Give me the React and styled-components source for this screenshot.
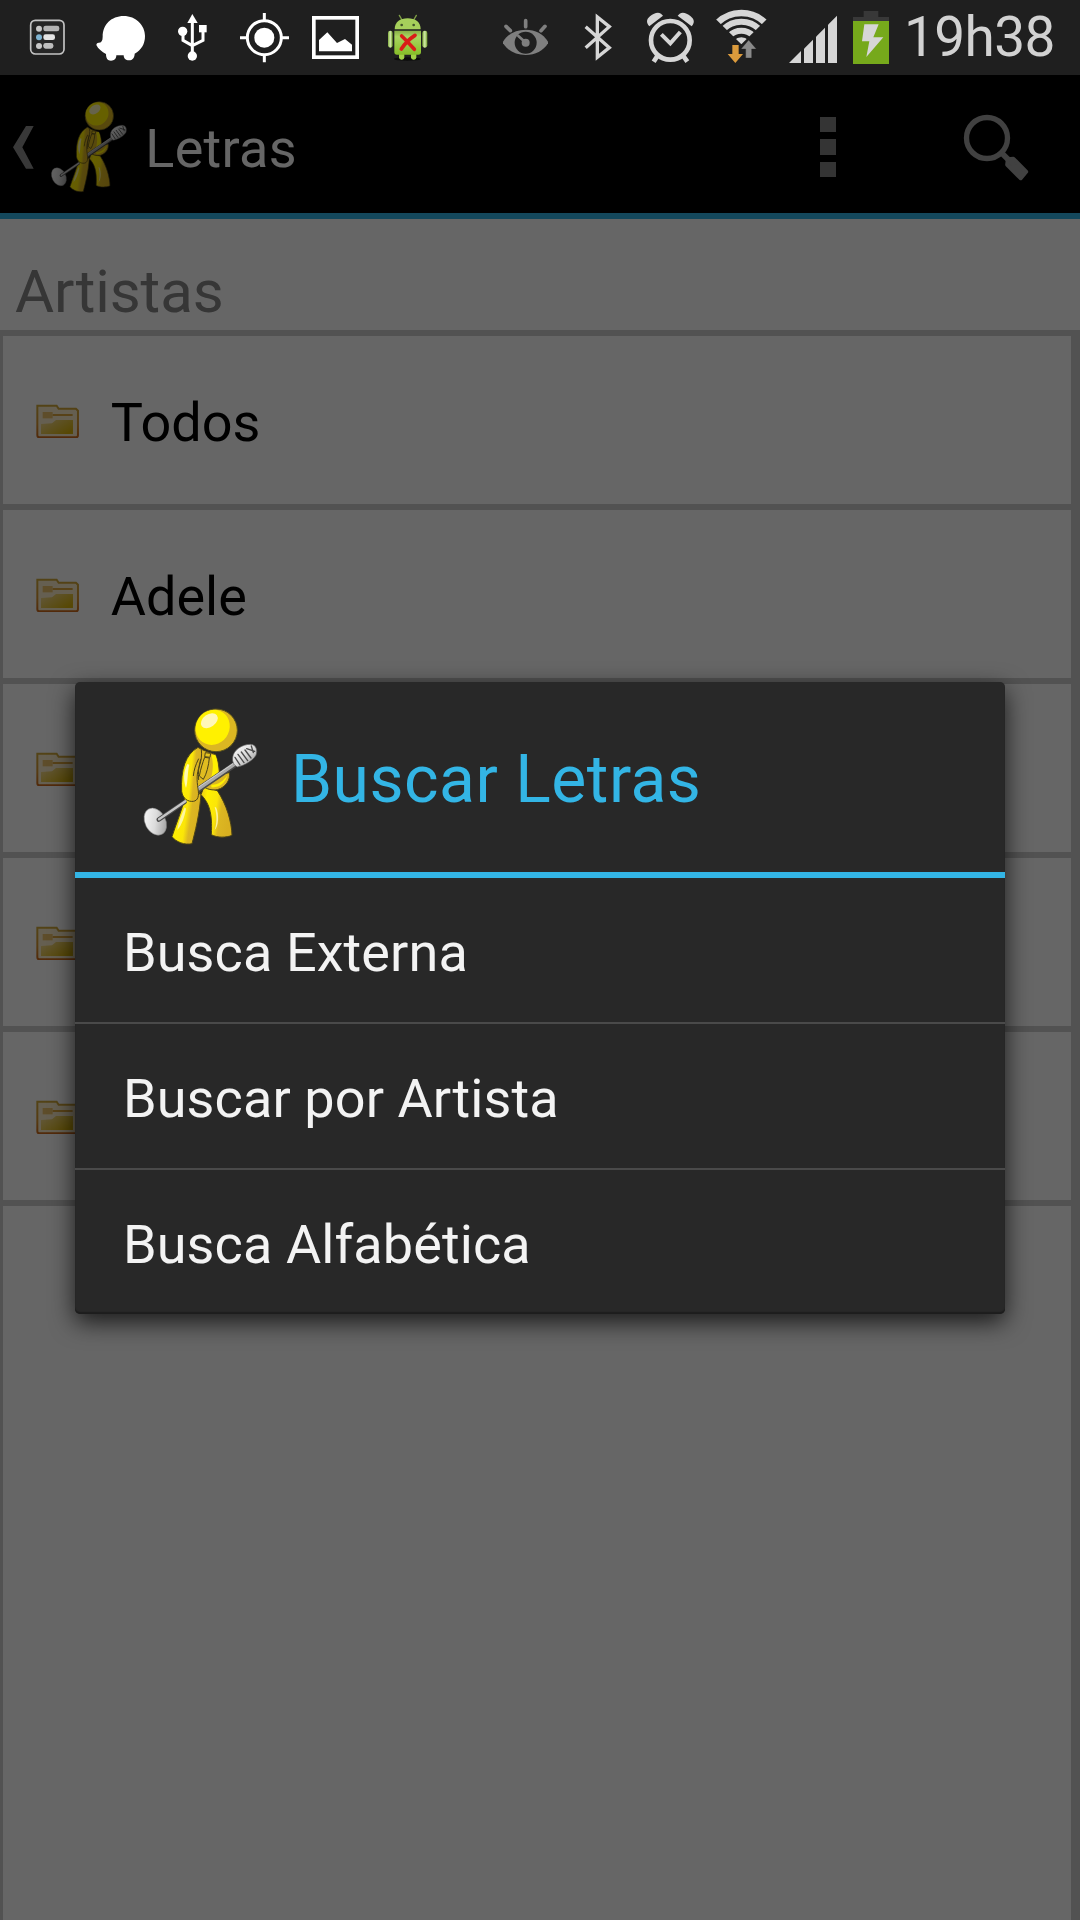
import React from "react";
import styled, { createGlobalStyle } from "styled-components";

const GlobalStyle = createGlobalStyle`
  body {
    margin: 0;
    background: #000;
    font-family: Roboto, "Noto Sans", sans-serif;
  }
`;

const Screen = styled.div`
  width: 1080px;
  height: 1920px;
  display: flex;
  flex-direction: column;
  overflow: hidden;
`;

const StatusBar = styled.header`
  flex: none;
  height: 75px;
  display: flex;
  align-items: center;
  background: #1f1f1f;
`;

const StatusSpacer = styled.div`
  flex: 1;
`;

const Glyph = styled.svg`
  display: block;
  flex: none;
  width: ${(p) => p.$w}px;
  height: ${(p) => p.$h}px;
  margin-top: ${(p) => p.$drop || 0}px;
`;

const Clock = styled.time`
  width: 182px;
  box-sizing: border-box;
  padding-left: 6px;
  font-size: 55px;
  line-height: 75px;
  letter-spacing: -0.6px;
  color: #d2d2d2;
  white-space: nowrap;
`;

const AppArea = styled.div`
  position: relative;
  flex: 1;
  display: flex;
  flex-direction: column;
  background: #fff;
`;

const ActionBar = styled.nav`
  flex: none;
  height: 144px;
  box-sizing: border-box;
  display: flex;
  align-items: center;
  background: #000;
  border-bottom: 6px solid #33b5e5;
`;

const BarTitle = styled.h1`
  flex: 1;
  margin: 0;
  padding: 9px 0 0 10px;
  font-size: 54px;
  font-weight: 400;
  line-height: 64px;
  letter-spacing: 0.3px;
  color: #fff;
`;

const Overflow = styled.div`
  width: 100px;
  display: flex;
  flex-direction: column;
  align-items: center;
  gap: 7px;
  padding-top: 6px;
`;

const OverflowDot = styled.span`
  width: 15.5px;
  height: 15.5px;
  background: #828282;
`;

const SectionTitle = styled.h2`
  flex: none;
  box-sizing: border-box;
  height: 117px;
  margin: 0;
  padding: 38px 0 0 15px;
  border-bottom: 6px solid #cecece;
  font-size: 60px;
  font-weight: 400;
  line-height: 70px;
  letter-spacing: -0.1px;
  color: #878787;
`;

const List = styled.ul`
  flex: 1;
  margin: 0;
  padding: 0;
  list-style: none;
  border-left: 3px solid #cecece;
  border-right: 9px solid #cecece;
`;

const ListRow = styled.li`
  height: 168px;
  display: flex;
  align-items: center;
  gap: 31.5px;
  padding-left: 33px;
  border-bottom: 6px solid #cecece;
  font-size: 54px;
  color: #000;
`;

const RowLabel = styled.span`
  padding-top: 4px;
`;

const Scrim = styled.div`
  position: absolute;
  inset: 0;
  display: flex;
  align-items: center;
  justify-content: center;
  box-sizing: border-box;
  padding-top: 1px;
  background: rgba(0, 0, 0, 0.6);
`;

const Dialog = styled.section`
  width: 930px;
  border-radius: 5px;
  background: #282828;
  box-shadow: 0 8px 24px rgba(0, 0, 0, 0.75), inset 0 -2px 1px #1d1d1d;
`;

const DialogHead = styled.header`
  height: 190px;
  display: flex;
  align-items: center;
  padding-left: 55px;
  border-bottom: 6px solid #33b5e5;
`;

const DialogTitle = styled.h2`
  margin: 0;
  padding: 6px 0 0 21px;
  font-size: 66px;
  font-weight: 400;
  line-height: 78px;
  letter-spacing: 0.5px;
  color: #33b5e5;
`;

const Option = styled.div`
  height: 144px;
  display: flex;
  align-items: center;
  padding: 5px 0 0 48px;
  box-sizing: border-box;
  font-size: 54px;
  letter-spacing: 0.1px;
  color: #f3f3f3;

  & + & {
    border-top: 2px solid #4a4a4a;
    height: 146px;
  }
`;

function KaraokeMan({ width, height, drop, id }) {
  const body = `${id}-body`;
  const metal = `${id}-metal`;
  return (
    <Glyph viewBox="0 0 420 510" $w={width} $h={height} $drop={drop}>
      <defs>
        <linearGradient id={body} x1="0" x2="1" y1="0" y2="0.25">
          <stop offset="0" stopColor="#e8c61c" />
          <stop offset="0.22" stopColor="#fff000" />
          <stop offset="0.55" stopColor="#fbe608" />
          <stop offset="0.72" stopColor="#dcb722" />
          <stop offset="1" stopColor="#d8b020" />
        </linearGradient>
        <linearGradient id={metal} x1="0" x2="1" y1="0" y2="1">
          <stop offset="0" stopColor="#ffffff" />
          <stop offset="0.5" stopColor="#dcdcdc" />
          <stop offset="1" stopColor="#8e8e8e" />
        </linearGradient>
      </defs>
      <g stroke="#4b4317" strokeWidth="3" strokeLinejoin="round">
        <path d="M164 325 C156 360 138 402 126 440 C138 456 164 466 186 461 C194 430 210 370 213 310 Z" fill={`url(#${body})`} />
        <path d="M213 314 C236 338 248 366 244 434 C262 444 290 443 306 436 C305 396 290 344 262 302 L222 290 Z" fill={`url(#${body})`} />
        <path d="M204 172 C222 184 244 188 256 194 C266 212 266 232 270 252 L298 248 C302 268 288 292 262 299 C244 302 228 296 222 290 L200 320 L190 240 Z" fill="#dcb722" />
        <path d="M244 196 C250 214 250 236 244 262 L262 262 C266 240 264 212 256 194 Z" fill="#fff000" stroke="none" />
        <path d="M244 284 C262 286 280 274 292 256 C286 280 268 294 244 292 Z" fill="#fff000" stroke="none" />
        <path d="M226 188 L242 190 L240 202 L224 200 Z" fill="#e5c41e" />
        <path d="M224 202 L238 204 C236 226 230 252 220 268 L208 258 C212 236 218 218 224 202 Z" fill="#e0bc20" />
      </g>
      <g strokeLinecap="round">
        <path d="M200 302 L314 224" stroke="#4a4a4a" strokeWidth="17" />
        <path d="M200 300 L314 222" stroke="#a9a9a9" strokeWidth="11" />
        <path d="M202 294 L312 219" stroke="#cfcfcf" strokeWidth="3" />
      </g>
      <path
        d="M204 172 C166 194 152 238 155 304 C158 326 174 336 190 334 C204 332 208 318 204 296 C200 270 200 250 208 228 C214 210 216 198 214 178 Z"
        fill={`url(#${body})`}
        stroke="#4b4317"
        strokeWidth="3"
      />
      <path d="M172 222 C160 246 160 270 168 294 C174 276 172 246 178 224 Z" fill="#fffbd0" opacity="0.85" />
      <path d="M206 206 C196 226 192 240 190 258 M212 208 C206 230 204 248 206 270" fill="none" stroke="#4b4317" strokeWidth="3" />
      <path d="M164 352 C154 376 144 400 142 420 C156 404 164 380 168 356 Z" fill="#fffbd0" opacity="0.75" />
      <path d="M254 352 C262 376 260 404 254 420 C266 410 268 372 258 352 Z" fill="#fffbd0" opacity="0.75" />
      <ellipse cx="76" cy="395" rx="31" ry="43" transform="rotate(-28 76 395)" fill={`url(#${metal})`} stroke="#777" strokeWidth="1.5" />
      <path d="M86 389 L164 336" stroke="#484848" strokeWidth="13" strokeLinecap="round" />
      <path d="M87 388 L166 334" stroke="#c6c6c6" strokeWidth="7" strokeLinecap="round" />
      <circle cx="258" cy="121" r="64" fill="#dcb722" stroke="#57501b" strokeWidth="3" />
      <ellipse cx="248" cy="112" rx="50" ry="54" transform="rotate(35 248 112)" fill="#fff100" />
      <ellipse cx="238" cy="92" rx="28" ry="19" transform="rotate(-36 238 92)" fill="#fff7b8" />
      <path d="M308 202 C310 180 338 162 362 163 C378 164 384 180 378 196 C368 212 346 226 322 231 C312 226 306 216 308 202 Z" fill={`url(#${metal})`} stroke="#555" strokeWidth="2" />
      <path
        d="M315 202 L330 225 M324 193 L342 218 M334 186 L353 212 M345 180 L363 204 M350 176 L374 184 M364 168 L370 188"
        stroke="#4c4c4c"
        strokeWidth="4"
        strokeLinecap="round"
      />
    </Glyph>
  );
}

function FolderIcon() {
  return (
    <Glyph viewBox="0 0 130 104" $w={43.3} $h={34.7} $drop={2}>
      <defs>
        <linearGradient id="folderEdge" x1="0" x2="0" y1="0" y2="1">
          <stop offset="0" stopColor="#cfa93a" />
          <stop offset="0.6" stopColor="#d8932e" />
          <stop offset="1" stopColor="#cc6a1c" />
        </linearGradient>
        <linearGradient id="folderFill" x1="0" x2="1" y1="0" y2="0.7">
          <stop offset="0" stopColor="#f6dc98" />
          <stop offset="1" stopColor="#d9b40c" />
        </linearGradient>
      </defs>
      <path d="M4 5 H62 L68 14 H120 L126 20 V94 Q126 100 120 100 H10 Q4 100 4 94 Z" fill="#fdeecb" stroke="url(#folderEdge)" strokeWidth="6" />
      <path d="M20 24 H50 V43 H20 Z" fill="#eac06a" />
      <path d="M50 33 H110" stroke="#dba63c" strokeWidth="6" />
      <path d="M15 60 L48 58 L60 48 H111 V90 H15 Z" fill="url(#folderFill)" />
    </Glyph>
  );
}

function NotificationIcons() {
  return (
    <>
      <Glyph viewBox="0 0 240 225" $w={80} $h={75}>
        <rect x="92" y="61" width="100" height="101" rx="14" fill="#262626" stroke="#c4c4c4" strokeWidth="5" />
        <circle cx="117" cy="86" r="9" fill="#c8c8c8" />
        <circle cx="117" cy="112" r="9" fill="#7fb4d2" />
        <circle cx="117" cy="138" r="9" fill="#c8c8c8" />
        <rect x="130" y="77" width="48" height="17" rx="7" fill="#b4b4b4" />
        <rect x="130" y="103" width="35" height="17" rx="7" fill="#e4e4e4" />
        <rect x="130" y="129" width="30" height="17" rx="7" fill="#bdbdbd" />
      </Glyph>
      <Glyph viewBox="240 0 240 225" $w={80} $h={75}>
        <path
          d="M308 110 C308 74 334 48 371 48 C408 48 435 76 435 108 C435 132 424 150 404 161 C404 172 398 181 387 181 C377 181 371 175 371 166 H349 C349 176 343 182 333 182 C323 182 318 175 318 162 C306 156 294 146 289 135 C290 130 292 128 296 128 C304 128 308 122 308 110 Z"
          fill="#fff"
        />
      </Glyph>
      <Glyph viewBox="480 0 210 225" $w={70} $h={75}>
        <g fill="#fff">
          <path d="M577 42 L593 69 H562 Z" />
          <circle cx="577" cy="168" r="14" />
          <circle cx="548" cy="94" r="14" />
          <rect x="597" y="75" width="23" height="22" />
        </g>
        <path d="M577 60 V165 M549 95 V121 L577 137 M609 95 V121 L577 137" fill="none" stroke="#fff" strokeWidth="9" />
      </Glyph>
      <Glyph viewBox="690 0 210 225" $w={70} $h={75}>
        <circle cx="793" cy="113" r="51" fill="none" stroke="#fff" strokeWidth="9" />
        <circle cx="793" cy="113" r="30" fill="#fff" />
        <path d="M793 39 V62 M793 164 V187 M720 113 H744 M842 113 H867" stroke="#fff" strokeWidth="9" />
      </Glyph>
      <Glyph viewBox="900 0 216 225" $w={72} $h={75}>
        <rect x="941.5" y="53.5" width="130" height="118" fill="none" stroke="#fff" strokeWidth="11" />
        <path d="M957 154 V120 L982 97 L1011 129 L1035 117 L1056 134 V154 Z" fill="#fff" />
      </Glyph>
      <Glyph viewBox="1116 0 234 225" $w={78} $h={75}>
        <defs>
          <linearGradient id="droid" x1="0" x2="0" y1="0" y2="1">
            <stop offset="0" stopColor="#86ad44" />
            <stop offset="0.25" stopColor="#a9d560" />
            <stop offset="1" stopColor="#86bd28" />
          </linearGradient>
          <linearGradient id="droidArm" x1="0" x2="1" y1="0" y2="0">
            <stop offset="0" stopColor="#80ac3c" />
            <stop offset="0.5" stopColor="#d3ecaa" />
            <stop offset="1" stopColor="#6c9a28" />
          </linearGradient>
        </defs>
        <ellipse cx="1222" cy="177" rx="40" ry="5" fill="#0c0c0c" />
        <path d="M1198 46 L1206 60 M1249 46 L1241 60" stroke="#7e9d45" strokeWidth="4" strokeLinecap="round" />
        <path d="M1184 88 C1184 66 1200 55 1223 55 C1246 55 1262 66 1262 88 Z" fill="#a6d05b" />
        <circle cx="1205" cy="75" r="4" fill="#41552a" />
        <circle cx="1241" cy="75" r="4" fill="#41552a" />
        <rect x="1197" y="158" width="16" height="21" rx="7" fill="#a0cf45" />
        <rect x="1233" y="158" width="16" height="21" rx="7" fill="#a0cf45" />
        <path d="M1183 92 H1263 V156 Q1263 164 1255 164 H1191 Q1183 164 1183 156 Z" fill="url(#droid)" />
        <rect x="1164" y="92" width="14" height="51" rx="7" fill="url(#droidArm)" />
        <rect x="1267" y="92" width="15" height="51" rx="7" fill="url(#droidArm)" />
        <path d="M1205 108 Q1220 122 1243 148 M1245 106 Q1220 122 1204 147" fill="none" stroke="#d91c18" strokeWidth="11" strokeLinecap="round" />
      </Glyph>
    </>
  );
}

function SystemIcons() {
  return (
    <>
      <Glyph viewBox="30 0 210 225" $w={70} $h={75}>
        <path d="M78 79 L91 92 M137 62 V80 M195 79 L183 92" stroke="#7f7f7f" strokeWidth="11" strokeLinecap="round" />
        <path d="M69 125 C84 101 108 89 137 89 C166 89 190 101 204 125 V130 C190 153 166 165 137 165 C108 165 84 153 69 130 Z" fill="#7f7f7f" />
        <circle cx="137" cy="128" r="33" fill="#1f1f1f" />
        <circle cx="137" cy="128" r="12" fill="#7f7f7f" />
        <path d="M115 108 L136 127" stroke="#7f7f7f" strokeWidth="8" strokeLinecap="round" />
      </Glyph>
      <Glyph viewBox="240 0 210 225" $w={70} $h={75}>
        <path d="M317 80 L388 143 L352 172 V51 L388 80 L317 143" fill="none" stroke="#d6d6d6" strokeWidth="10" />
      </Glyph>
      <Glyph viewBox="450 0 225 225" $w={75} $h={75}>
        <circle cx="571" cy="121" r="58" fill="none" stroke="#d6d6d6" strokeWidth="14" />
        <path d="M544 103 L571 130 L601 96" fill="none" stroke="#d6d6d6" strokeWidth="12" />
        <path d="M534 165 L521 185 M608 165 L622 185" stroke="#d6d6d6" strokeWidth="14" />
        <path d="M508 79 C498 68 499 58 510 49 C522 39 534 35 543 41 L549 47 Z" fill="#d6d6d6" />
        <path d="M635 79 C645 68 643 58 632 49 C620 39 608 35 599 41 L593 47 Z" fill="#d6d6d6" />
      </Glyph>
      <Glyph viewBox="675 0 210 225" $w={70} $h={75}>
        <clipPath id="wifiFan">
          <path d="M784 133 L700 50 V20 H868 V50 Z" />
        </clipPath>
        <g clipPath="url(#wifiFan)" fill="none" stroke="#d6d6d6">
          <circle cx="784" cy="142" r="103" strokeWidth="19" />
          <circle cx="784" cy="142" r="77" strokeWidth="18" />
          <circle cx="784" cy="142" r="50" strokeWidth="18" />
          <circle cx="784" cy="142" r="18" strokeWidth="24" />
        </g>
        <path d="M757 135 H776 V162 H789 L766 189 L743 162 H757 Z" fill="#dc9b3c" />
        <path d="M806 120 L829 147 H815 V174 H797 V147 H783 Z" fill="#8a8a8a" stroke="#1f1f1f" strokeWidth="1" />
      </Glyph>
      <Glyph viewBox="15 0 210 225" $w={70} $h={75}>
        <g fill="#d6d6d6">
          <path d="M57 189 L93 153 V189 Z" />
          <path d="M102 189 V146 L129 119 V189 Z" />
          <path d="M138 189 V110 L165 83 V189 Z" />
          <path d="M174 189 V74 L201 47 V189 Z" />
        </g>
      </Glyph>
      <Glyph viewBox="225 0 159 225" $w={53} $h={75}>
        <path d="M281 33 H325 V51 H357 V65 H249 V51 H281 Z" fill="#383838" />
        <rect x="249" y="63" width="108" height="129" fill="#76a91b" />
        <path d="M283 73 H326 L310 112 H340 L289 171 L298 124 H276 Z" fill="#d6d6d6" />
      </Glyph>
    </>
  );
}

const artists = ["Todos", "Adele", "", "", ""];
const options = ["Busca Externa", "Buscar por Artista", "Busca Alfabética"];

export default function App() {
  return (
    <Screen>
      <GlobalStyle />
      <StatusBar>
        <NotificationIcons />
        <StatusSpacer />
        <SystemIcons />
        <Clock>19h38</Clock>
      </StatusBar>
      <AppArea>
        <ActionBar>
          <Glyph viewBox="0 0 126 414" $w={42} $h={138}>
            <path d="M78 153 H101 L67 217 L101 281 H78 L39 217 Z" fill="#8c8c8c" />
          </Glyph>
          <KaraokeMan width={93.3} height={113.3} drop={4} id="bar" />
          <BarTitle>Letras</BarTitle>
          <Overflow>
            <OverflowDot />
            <OverflowDot />
            <OverflowDot />
          </Overflow>
          <Glyph viewBox="294 0 606 414" $w={202} $h={138}>
            <g transform="translate(0 3)">
              <circle cx="621" cy="186" r="61.5" fill="none" stroke="#a2a2a2" strokeWidth="16" />
              <path d="M662 228 L690 256" stroke="#a2a2a2" strokeWidth="17" />
              <path d="M684 250 L700 249 L738 287 L722 306 L682 266 Z" fill="#a2a2a2" stroke="#a2a2a2" strokeWidth="13" strokeLinejoin="round" />
            </g>
          </Glyph>
        </ActionBar>
        <SectionTitle>Artistas</SectionTitle>
        <List>
          {artists.map((name, i) => (
            <ListRow key={i}>
              <FolderIcon />
              <RowLabel>{name}</RowLabel>
            </ListRow>
          ))}
        </List>
        <Scrim>
          <Dialog>
            <DialogHead>
              <KaraokeMan width={140} height={170} drop={-4} id="dialog" />
              <DialogTitle>Buscar Letras</DialogTitle>
            </DialogHead>
            {options.map((o) => (
              <Option key={o}>{o}</Option>
            ))}
          </Dialog>
        </Scrim>
      </AppArea>
    </Screen>
  );
}
